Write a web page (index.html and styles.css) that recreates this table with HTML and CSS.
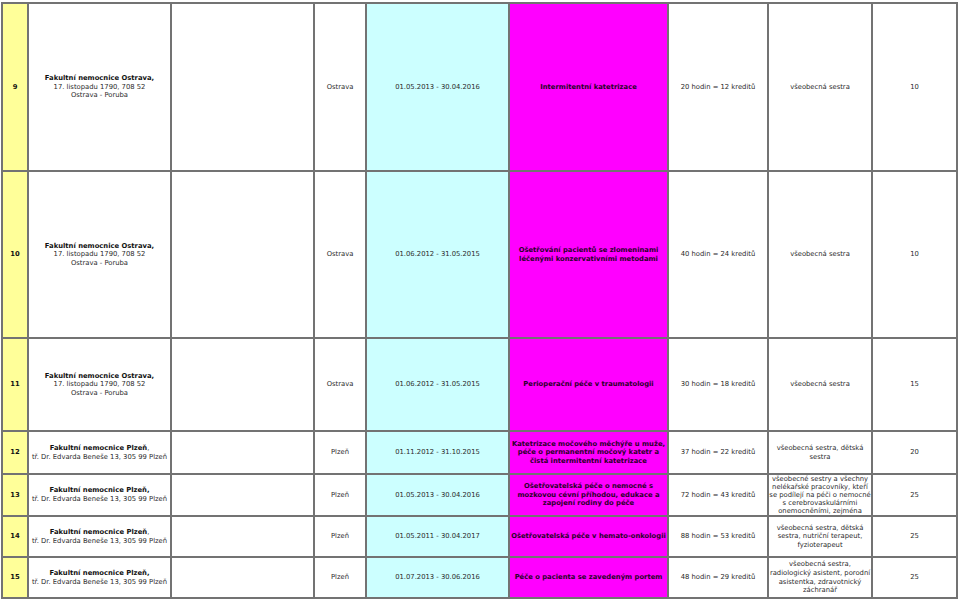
FILE: index.html
```html
<!DOCTYPE html>
<html lang="cs">
<head>
<meta charset="utf-8">
<title>Kurzy</title>
<link rel="stylesheet" href="styles.css">
</head>
<body>
<table class="grid">
  <colgroup>
    <col class="c-num"><col class="c-hosp"><col class="c-empty"><col class="c-city"><col class="c-date"><col class="c-name"><col class="c-cred"><col class="c-who"><col class="c-cap">
  </colgroup>
  <tbody>
    <tr class="r-big">
      <td class="num">9</td>
      <td class="hosp"><b>Fakultní nemocnice Ostrava,</b><br>17. listopadu 1790, 708 52<br>Ostrava - Poruba</td>
      <td></td>
      <td>Ostrava</td>
      <td class="date">01.05.2013 - 30.04.2016</td>
      <td class="name">Intermitentní katetrizace</td>
      <td>20 hodin = 12 kreditů</td>
      <td>všeobecná sestra</td>
      <td>10</td>
    </tr>
    <tr class="r-big2">
      <td class="num">10</td>
      <td class="hosp"><b>Fakultní nemocnice Ostrava,</b><br>17. listopadu 1790, 708 52<br>Ostrava - Poruba</td>
      <td></td>
      <td>Ostrava</td>
      <td class="date">01.06.2012 - 31.05.2015</td>
      <td class="name">Ošetřování pacientů se zlomeninami<br>léčenými konzervativními metodami</td>
      <td>40 hodin = 24 kreditů</td>
      <td>všeobecná sestra</td>
      <td>10</td>
    </tr>
    <tr class="r-mid">
      <td class="num">11</td>
      <td class="hosp"><b>Fakultní nemocnice Ostrava,</b><br>17. listopadu 1790, 708 52<br>Ostrava - Poruba</td>
      <td></td>
      <td>Ostrava</td>
      <td class="date">01.06.2012 - 31.05.2015</td>
      <td class="name">Perioperační péče v traumatologii</td>
      <td>30 hodin = 18 kreditů</td>
      <td>všeobecná sestra</td>
      <td>15</td>
    </tr>
    <tr class="r-s1">
      <td class="num">12</td>
      <td class="hosp"><b>Fakultní nemocnice Plzeň</b>,<br>tř. Dr. Edvarda Beneše 13, 305 99 Plzeň</td>
      <td></td>
      <td>Plzeň</td>
      <td class="date">01.11.2012 - 31.10.2015</td>
      <td class="name">Katetrizace močového měchýře u muže,<br>péče o permanentní močový katetr a<br>čistá intermitentní katetrizace</td>
      <td>37 hodin = 22 kreditů</td>
      <td>všeobecná sestra, dětská<br>sestra</td>
      <td>20</td>
    </tr>
    <tr class="r-s2">
      <td class="num">13</td>
      <td class="hosp"><b>Fakultní nemocnice Plzeň,</b><br>tř. Dr. Edvarda Beneše 13, 305 99 Plzeň</td>
      <td></td>
      <td>Plzeň</td>
      <td class="date">01.05.2013 - 30.04.2016</td>
      <td class="name">Ošetřovatelská péče o nemocné s<br>mozkovou cévní příhodou, edukace a<br>zapojení rodiny do péče</td>
      <td>72 hodin = 43 kreditů</td>
      <td><div class="clip tight">všeobecné sestry a všechny<br>nelékařské pracovníky, kteří<br>se podílejí na péči o nemocné<br>s cerebrovaskulárními<br>onemocněními, zejména</div></td>
      <td>25</td>
    </tr>
    <tr class="r-s3">
      <td class="num">14</td>
      <td class="hosp"><b>Fakultní nemocnice Plzeň</b>,<br>tř. Dr. Edvarda Beneše 13, 305 99 Plzeň</td>
      <td></td>
      <td>Plzeň</td>
      <td class="date">01.05.2011 - 30.04.2017</td>
      <td class="name">Ošetřovatelská péče v hemato-onkologii</td>
      <td>88 hodin = 53 kreditů</td>
      <td>všeobecná sestra, dětská<br>sestra, nutriční terapeut,<br>fyzioterapeut</td>
      <td>25</td>
    </tr>
    <tr class="r-s3">
      <td class="num">15</td>
      <td class="hosp"><b>Fakultní nemocnice Plzeň,</b><br>tř. Dr. Edvarda Beneše 13, 305 99 Plzeň</td>
      <td></td>
      <td>Plzeň</td>
      <td class="date">01.07.2013 - 30.06.2016</td>
      <td class="name">Péče o pacienta se zavedeným portem</td>
      <td>48 hodin = 29 kreditů</td>
      <td><div class="clip">všeobecná sestra,<br>radiologický asistent, porodní<br>asistentka, zdravotnický<br>záchranář</div></td>
      <td>25</td>
    </tr>
  </tbody>
</table>
</body>
</html>
```

FILE: styles.css
```css
html, body {
  margin: 0;
  padding: 0;
  background: #ffffff;
}

.grid {
  margin: 2px 0 0 1px;
  border-collapse: collapse;
  table-layout: fixed;
  width: 957px;
  font-family: "DejaVu Sans", Verdana, sans-serif;
  font-size: 6.8px;
  line-height: 8.6px;
  color: #2b2b2b;
}

.grid td {
  border: 2px solid #737373;
  padding: 0;
  text-align: center;
  vertical-align: middle;
  white-space: nowrap;
  overflow: hidden;
}

.c-num { width: 26px; }
.c-hosp { width: 143px; }
.c-empty { width: 143px; }
.c-city { width: 52px; }
.c-date { width: 143px; }
.c-name { width: 159px; }
.c-cred { width: 100px; }
.c-who { width: 104px; }
.c-cap { width: 85px; }

.r-big { height: 168px; }
.r-big2 { height: 167px; }
.r-mid { height: 93px; }
.r-s1 { height: 43px; }
.r-s2 { height: 42px; }
.r-s3 { height: 41px; }

.num {
  background: #ffff99;
  font-weight: bold;
  color: #111111;
}

.hosp b {
  color: #111111;
}

.date {
  background: #ccffff;
}

.name {
  background: #ff00ff;
  font-weight: bold;
  color: #2a002a;
}

.clip {
  max-height: 40px;
  overflow: hidden;
}

.tight {
  line-height: 8px;
}
```
